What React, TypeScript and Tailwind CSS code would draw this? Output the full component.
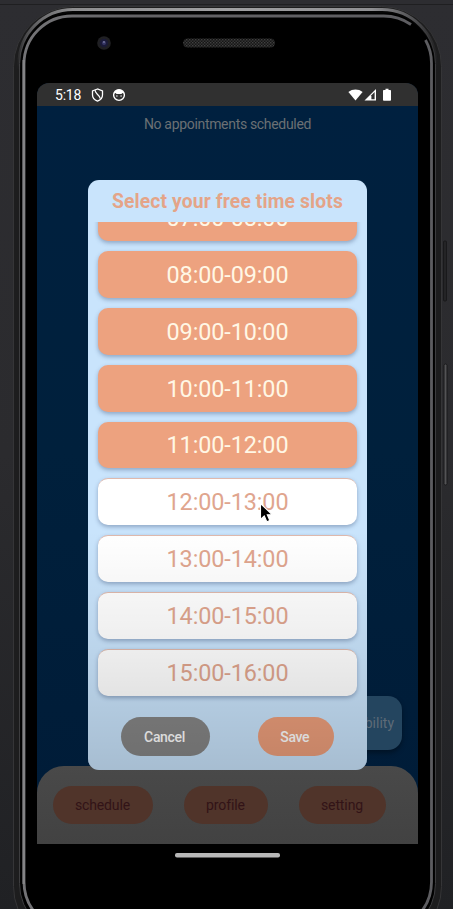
const slots = [
  { label: "07:00-08:00", selected: true },
  { label: "08:00-09:00", selected: true },
  { label: "09:00-10:00", selected: true },
  { label: "10:00-11:00", selected: true },
  { label: "11:00-12:00", selected: true },
  { label: "12:00-13:00", selected: false },
  { label: "13:00-14:00", selected: false },
  { label: "14:00-15:00", selected: false },
  { label: "15:00-16:00", selected: false },
];

function PhoneFrame() {
  return (
    <svg className="absolute inset-0" width="453" height="909" viewBox="0 0 453 909" fill="none">
      <defs>
        <linearGradient id="rim" x1="0" y1="0" x2="453" y2="0" gradientUnits="userSpaceOnUse">
          <stop offset="0.04" stopColor="#555557" />
          <stop offset="0.16" stopColor="#8d8d8f" />
          <stop offset="0.5" stopColor="#a0a0a2" />
          <stop offset="0.82" stopColor="#8f8f92" />
          <stop offset="0.96" stopColor="#303032" />
        </linearGradient>
        <linearGradient id="rimFade" x1="0" y1="0" x2="0" y2="70" gradientUnits="userSpaceOnUse">
          <stop offset="0" stopColor="#fff" />
          <stop offset="0.3" stopColor="#fff" />
          <stop offset="1" stopColor="#000" />
        </linearGradient>
        <mask id="topOnly" maskUnits="userSpaceOnUse" x="0" y="0" width="453" height="909">
          <rect width="453" height="909" fill="url(#rimFade)" />
        </mask>
        <linearGradient id="inner" x1="0" y1="0" x2="453" y2="0" gradientUnits="userSpaceOnUse">
          <stop offset="0" stopColor="#77777a" />
          <stop offset="0.3" stopColor="#646366" />
          <stop offset="1" stopColor="#5c5c60" />
        </linearGradient>
        <pattern id="mesh" width="3" height="3" patternUnits="userSpaceOnUse">
          <rect width="3" height="3" fill="#161616" />
          <rect width="1.4" height="1.4" fill="#414141" />
          <rect x="1.5" y="1.5" width="1.4" height="1.4" fill="#3a3a3a" />
        </pattern>
      </defs>
      <path d="M0 4.5H453" stroke="#1f1f21" />
      <rect x="13.5" y="6.5" width="428" height="940" rx="60" fill="#1d1d1e" stroke="#353537" />
      <rect x="19.5" y="9.5" width="416" height="928" rx="54" fill="#050505" stroke="#3d3d3f" />
      <rect x="19" y="9.5" width="417" height="928" rx="54" stroke="url(#rim)" strokeWidth="3" mask="url(#topOnly)" />
      <rect x="21.2" y="13" width="413" height="922" rx="51" fill="#000" />
      <path
        d="M411 24.5A48 48 0 0 0 383.5 16H72A48 48 0 0 0 24 64V882A48 48 0 0 0 72 930H383.5A48 48 0 0 0 431.5 882V64A48 48 0 0 0 425.5 40"
        stroke="url(#inner)"
        strokeWidth="2.8"
      />
      <path d="M23.7 60V884" stroke="#858587" strokeWidth="2.4" />
      <rect x="443.5" y="241" width="3" height="60" rx="1" fill="#242426" stroke="#19191b" />
      <rect x="444" y="364" width="3" height="121" rx="1.5" fill="#535355" stroke="#19191b" />
      <circle cx="104" cy="43" r="6.8" fill="#202023" />
      <circle cx="104" cy="43" r="4.3" fill="#1b1b38" />
      <circle cx="104" cy="43" r="2" fill="#373766" />
      <circle cx="104" cy="42" r="0.9" fill="#7778a0" />
      <rect x="183" y="38.5" width="92" height="9" rx="4.5" fill="url(#mesh)" />
      <rect x="175" y="853" width="105" height="4.5" rx="2" fill="#b7b7b7" />
    </svg>
  );
}

function StatusBar() {
  return (
    <header className="flex h-[23px] shrink-0 items-center bg-[#303030] pr-[26px] pl-[18px] text-white">
      <span className="w-[36px] pt-[1px] text-[14px] leading-none tracking-[-0.2px]">5:18</span>
      <svg className="h-[14px] w-[13px]" viewBox="0 0 13 14" fill="none" stroke="#fff" strokeWidth="1.3">
        <path d="M6.5 1 1.5 2.9V7c0 2.8 2 5 5 6.1 3-1.1 5-3.3 5-6.1V2.9L6.5 1Z" />
        <path d="M4.2 2.2C3.7 5.8 8 5.6 9.3 10.6" />
      </svg>
      <svg className="ml-[8px] h-[14px] w-[14px]" viewBox="0 0 14 14" fill="none">
        <circle cx="7" cy="7" r="5.4" stroke="#fff" strokeWidth="1.4" />
        <path d="M2 5.8C2.7 2.8 4.4 1.5 7 1.5s4.3 1.3 5 4.3L10.4 5 9.4 6H4.6L3.6 5Z" fill="#fff" />
        <circle cx="4.9" cy="8" r=".7" fill="#fff" />
        <circle cx="9.1" cy="8" r=".7" fill="#fff" />
      </svg>
      <svg className="ml-auto h-[14px] w-[44px]" viewBox="0 0 44 14" fill="none">
        <path d="M.4 4C4.4.7 10.6.7 14.6 4L7.5 12.5Z" fill="#fff" />
        <path d="M16.5 12.5 28 1v11.5Z" fill="#fff" />
        <path d="M23.4 11.2V7.2L26.6 4v7.2Z" fill="#303030" />
        <path d="M35.8 2h1.7V.7h3V2h1.7q.8 0 .8.8v9q0 .9-.8.9h-6.4q-.8 0-.8-.9v-9q0-.8.8-.8Z" fill="#fff" />
      </svg>
    </header>
  );
}

function NavBar() {
  const item = "flex h-[38.5px] items-center justify-center rounded-full bg-[#50342a] text-[14px] text-[#321317]";
  return (
    <nav className="flex h-[78px] shrink-0 items-center rounded-t-[27px] bg-linear-to-b from-[#494949] to-[#424242] pl-[15.5px]">
      <span className={item + " w-[100px] tracking-[-0.15px]"}>schedule</span>
      <span className={item + " ml-[31px] w-[84px] tracking-[-0.1px]"}>profile</span>
      <span className={item + " ml-[31px] w-[87px] tracking-[-0.1px]"}>setting</span>
    </nav>
  );
}

function TimeSlotDialog() {
  return (
    <section
      role="dialog"
      className="absolute top-[97px] left-[51px] flex h-[590px] w-[279px] flex-col overflow-hidden rounded-[11px] bg-[#c9e4fc]"
    >
      <h1 className="h-[42px] shrink-0 pt-[1px] text-center text-[19.3px] leading-[42px] font-bold tracking-[0.13px] whitespace-nowrap text-[#e4a488]">
        Select your free time slots
      </h1>
      <div className="h-[485px] shrink-0 overflow-hidden px-[10px]">
        <ul className="-mt-[28px] flex flex-col gap-[10px]">
          {slots.map((slot) => (
            <li
              key={slot.label}
              className={
                "flex h-[46.9px] shrink-0 items-center justify-center rounded-[10px] text-[23.4px] tracking-[-0.1px] shadow-[0_2px_4px_rgba(55,75,115,0.4)] " +
                (slot.selected
                  ? "bg-[#eda27f] pt-[2px] text-[#fff7e5]"
                  : "border-t border-[#dfb9ad] bg-white text-[#e0a58e]")
              }
            >
              {slot.label}
            </li>
          ))}
        </ul>
      </div>
      <footer className="flex pt-[10px] pl-[33px] text-[14px] font-medium tracking-[-0.35px] text-white">
        <button className="h-[39px] w-[89px] rounded-full bg-[#858585] pt-[1px] pr-[2px]">Cancel</button>
        <button className="ml-[47.5px] h-[39px] w-[76.5px] rounded-full bg-[#ec9e7b] pt-[1px] pr-[2px]">Save</button>
      </footer>
      <div className="pointer-events-none absolute inset-x-0 bottom-0 h-[240px] bg-linear-to-b from-transparent via-black/7 to-black/17" />
    </section>
  );
}

export default function App() {
  return (
    <div className="relative h-[909px] w-[453px] overflow-hidden bg-linear-to-b from-[#2d2d31] via-[#2b2b2e] to-[#202124] font-[Roboto,sans-serif]">
      <PhoneFrame />
      <div className="relative pt-[83px] pl-[37px]">
        <main className="relative flex h-[761px] w-[381px] flex-col overflow-hidden rounded-t-[12px] bg-[#00203d]">
          <StatusBar />
          <div className="relative -mb-[28px] flex min-h-0 flex-1 flex-col bg-linear-to-b from-[#00203f] via-[#00203c] to-[#001c38]">
            <p className="pt-[8px] text-center text-[14px] leading-[20px] tracking-[-0.32px] text-[#6b7074]">
              No appointments scheduled
            </p>
            <button className="mt-auto mr-[16px] mb-[44px] flex h-[54px] w-[150px] items-center justify-end self-end rounded-[14px] bg-[#24455f] pr-[8px] text-[14px] text-[#5e6b77] shadow-[0_3px_5px_rgba(0,0,0,0.35)]">
              Add availability
            </button>
          </div>
          <div className="relative">
            <NavBar />
          </div>
          <TimeSlotDialog />
        </main>
      </div>
      <svg className="absolute top-[502px] left-[259px]" width="15" height="22" viewBox="0 0 15 22">
        <path d="M1.5 1.5v16l3.8-3.6 2.5 5.9 3-1.3-2.5-5.7h5Z" fill="#000" stroke="#fff" strokeWidth="1.1" />
      </svg>
    </div>
  );
}
